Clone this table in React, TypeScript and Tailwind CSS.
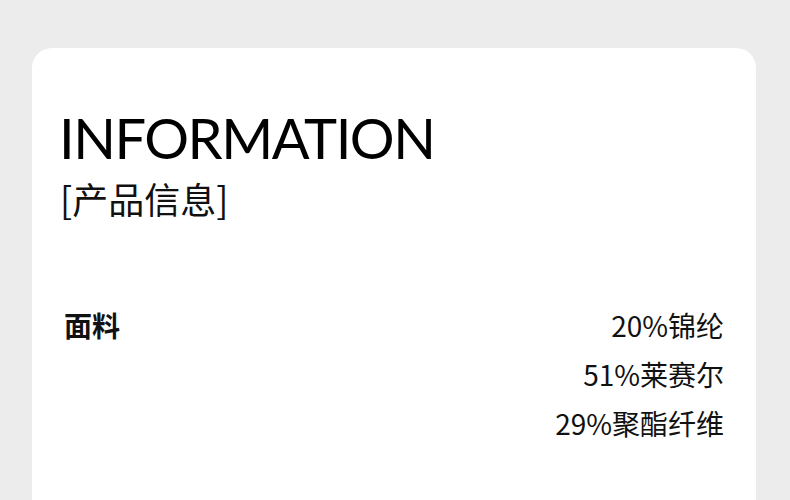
import React from "react";

const rows = ["20%锦纶", "51%莱赛尔", "29%聚酯纤维"];

export default function App() {
  return (
    <div className="h-[500px] w-[790px] overflow-hidden bg-[#ececec] pt-[48px] pl-[32px] pr-[34px]">
      <div className="h-[480px] rounded-[20px] bg-white pl-[29px] pr-[32px] pt-[62px]">
        <h1
          className="-ml-[2px] text-[56px] leading-none font-normal text-black tracking-[-1.5px]"
          style={{ fontFamily: "Lato, 'Noto Sans', sans-serif" }}
        >
          INFORMATION
        </h1>
        <div
          className="mt-[14px] text-[36px] leading-none font-normal text-[#111] -ml-[1px]"
          style={{ fontFamily: "'Noto Sans CJK SC', sans-serif" }}
        >
          [产品信息]
        </div>
        <div
          className="mt-[85px] flex justify-between text-[28px] text-[#111]"
          style={{ fontFamily: "'Noto Sans CJK SC', sans-serif" }}
        >
          <div className="pl-[3px] font-bold leading-[49px]">面料</div>
          <div className="flex flex-col items-end leading-[49px]">
            {rows.map((r) => (
              <div key={r}>{r}</div>
            ))}
          </div>
        </div>
      </div>
    </div>
  );
}
